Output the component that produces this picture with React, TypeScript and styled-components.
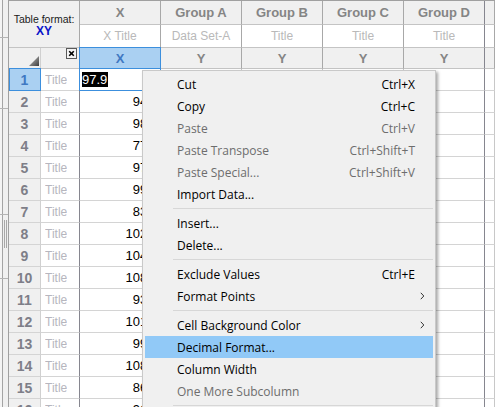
import React from 'react';
import styled, { createGlobalStyle, css } from 'styled-components';

const Global = createGlobalStyle`
  html, body { margin: 0; padding: 0; background: #ffffff; overflow: hidden; }
  body { width: 495px; height: 407px; }
`;

const Page = styled.div`
  position: relative;
  display: flex;
  width: 495px;
  height: 407px;
  overflow: hidden;
  font-family: "Liberation Sans", Arial, sans-serif;
`;

const Navigator = styled.div`
  flex: 0 0 9px;
  box-sizing: border-box;
  border-right: 1px solid #a0a0a0;
  background: linear-gradient(to right, #f4f4f4 2px, #a4a4a4 2px, #a4a4a4 3px, #f0f0f0 3px);
  display: flex;
  flex-direction: column;
`;

const NavSection = styled.div<{ $h: number }>`
  flex: 0 0 ${p => p.$h}px;
  box-sizing: border-box;
  border-bottom: 1px solid #b4b4b4;
`;

const Grip = styled.div`
  margin: 5px 0 0 4px;
  width: 1px;
  height: 28px;
  border-left: 1px solid #a8a8a8;
  border-right: 1px solid #a8a8a8;
`;

const Sheet = styled.div`
  flex: 1;
  box-sizing: border-box;
  border-top: 1px solid #a0a0a0;
  display: grid;
  grid-template-columns: 32px 39px 81px 81px 81px 81px 81px 1fr;
  grid-template-rows: 24px 23px 21px repeat(16, 22px);
  overflow: hidden;
`;

type Kind = 'format' | 'group' | 'subtitle' | 'corner' | 'colhead' | 'rowhead' | 'title' | 'value' | 'blank';

const kindStyles: Record<Kind, ReturnType<typeof css>> = {
  format: css`
    grid-column: 1 / span 2;
    grid-row: 1 / span 2;
    flex-direction: column;
    justify-content: center;
    background: #f0f0f0;
    border-right-color: #a8a8a8;
    border-bottom-color: #c4c4c4;
  `,
  group: css`
    justify-content: center;
    background: #f0f0f0;
    color: #858585;
    font-weight: bold;
    font-size: 13px;
    border-right-color: #a8a8a8;
    border-bottom-color: #c4c4c4;
  `,
  subtitle: css`
    justify-content: center;
    background: #ffffff;
    color: #b9b9b9;
    font-size: 12px;
    border-right-color: #a8a8a8;
    border-bottom-color: #c4c4c4;
  `,
  corner: css`
    background: #f0f0f0;
    justify-content: flex-end;
    border-right-color: #d0d0d0;
    border-bottom-color: #c4c4c4;
  `,
  colhead: css`
    justify-content: center;
    background: #f0f0f0;
    color: #858585;
    font-weight: bold;
    font-size: 13px;
    border-right-color: #a8a8a8;
    border-bottom-color: #c4c4c4;
  `,
  rowhead: css`
    justify-content: center;
    background: #f0f0f0;
    color: #7e7e88;
    font-weight: bold;
    font-size: 14px;
    border-right-color: #d0d0d0;
    border-bottom-color: #d4d4d4;
  `,
  title: css`
    justify-content: flex-start;
    padding-left: 4px;
    background: #ffffff;
    color: #b6b6be;
    font-size: 12px;
    border-right-color: #86868f;
    border-bottom-color: #d4d4d4;
  `,
  value: css`
    justify-content: flex-end;
    padding-right: 2px;
    background: #ffffff;
    color: #000000;
    font-size: 13px;
    border-right-color: #c8c8c8;
    border-bottom-color: #d4d4d4;
  `,
  blank: css`
    background: #ffffff;
    border-right-color: #c8c8c8;
    border-bottom-color: #d4d4d4;
  `,
};

const Cell = styled.div<{ $kind: Kind; $sel?: boolean; $dark?: boolean }>`
  box-sizing: border-box;
  position: relative;
  display: flex;
  align-items: center;
  min-width: 0;
  overflow: visible;
  white-space: nowrap;
  border-right: 1px solid transparent;
  border-bottom: 1px solid transparent;
  ${p => kindStyles[p.$kind]}
  ${p => p.$dark && css`border-right-color: #86868f;`}
  ${p => p.$sel && css`
    background: #aad0f2;
    color: #3f78c2;
  `}
`;

const SelectFrame = styled.span<{ $left: number }>`
  position: absolute;
  top: -1px;
  left: ${p => p.$left}px;
  right: -1px;
  bottom: -1px;
  border: 1px solid #3c8fdd;
  z-index: 1;
  pointer-events: none;
`;

const ClipText = styled.span`
  overflow: hidden;
`;

const FormatLabel = styled.div`
  font-size: 10.5px;
  color: #1a1a1a;
  line-height: 12px;
  margin-top: 3px;
`;

const FormatValue = styled.div`
  font-size: 12px;
  font-weight: bold;
  color: #0a14c8;
  line-height: 13px;
`;

const CornerIconWrap = styled.div<{ $top?: boolean }>`
  display: flex;
  align-self: ${p => (p.$top ? 'flex-start' : 'flex-end')};
  padding: ${p => (p.$top ? '0 2px 0 0' : '0 1px 2px 0')};
`;

const EditCell = styled(Cell)`
  justify-content: flex-start;
  padding-left: 2px;
`;

const EditSelection = styled.span`
  background: #000000;
  color: #ffffff;
  line-height: 15px;
  padding: 0 1px 0 0;
  font-size: 13px;
`;

const Menu = styled.div`
  position: absolute;
  left: 142px;
  top: 70px;
  width: 294px;
  box-sizing: border-box;
  background: #f0f0f0;
  border: 1px solid #c9c9c9;
  padding: 2px;
  box-shadow: 2px 2px 3px rgba(0, 0, 0, 0.35);
  font-family: "Open Sans", "Noto Sans", sans-serif;
  font-size: 12px;
  z-index: 10;
`;

const Item = styled.div<{ $disabled?: boolean; $active?: boolean }>`
  display: grid;
  grid-template-columns: 1fr auto 18px;
  align-items: center;
  height: 22px;
  padding-left: 32px;
  color: ${p => (p.$disabled ? '#6d6d6d' : '#000000')};
  background: ${p => (p.$active ? '#91c9f7' : 'transparent')};
`;

const Shortcut = styled.span`
  text-align: right;
`;

const Arrow = styled.span`
  display: flex;
  padding-left: 5px;
`;

const Separator = styled.div`
  height: 1px;
  margin: 3px 0 3px 28px;
  background: #d7d7d7;
`;

const Triangle = () => (
  <svg width="10" height="10" viewBox="0 0 10 10">
    <defs>
      <linearGradient id="tri" x1="0" y1="0" x2="1" y2="1">
        <stop offset="0" stopColor="#c8c8c8" />
        <stop offset="1" stopColor="#3c3c3c" />
      </linearGradient>
    </defs>
    <polygon points="10,0 10,10 0,10" fill="url(#tri)" />
  </svg>
);

const CloseBox = () => (
  <svg width="11" height="11" viewBox="0 0 11 11">
    <rect x="0.5" y="0.5" width="10" height="10" fill="#f4f4f4" stroke="#5a5a5a" />
    <path d="M3.2 3.2 L7.8 7.8 M7.8 3.2 L3.2 7.8" stroke="#000" strokeWidth="1.6" />
  </svg>
);

const Chevron = () => (
  <svg width="5" height="8" viewBox="0 0 5 8">
    <polyline points="0.8,0.8 3.8,4 0.8,7.2" fill="none" stroke="#333" strokeWidth="1" />
  </svg>
);

const groups = ['Group A', 'Group B', 'Group C', 'Group D'];
const values = ['97.9', '94.6', '98.2', '77.5', '97.3', '99.1', '83.4', '102.7', '104.2', '108.5', '93.8', '101.6', '99.7', '108.3', '86.9', '91.4'];

type MenuEntry =
  | { sep: true }
  | { label: string; shortcut?: string; disabled?: boolean; active?: boolean; sub?: boolean };

const menu: MenuEntry[] = [
  { label: 'Cut', shortcut: 'Ctrl+X' },
  { label: 'Copy', shortcut: 'Ctrl+C' },
  { label: 'Paste', shortcut: 'Ctrl+V', disabled: true },
  { label: 'Paste Transpose', shortcut: 'Ctrl+Shift+T', disabled: true },
  { label: 'Paste Special...', shortcut: 'Ctrl+Shift+V', disabled: true },
  { label: 'Import Data...' },
  { sep: true },
  { label: 'Insert...' },
  { label: 'Delete...' },
  { sep: true },
  { label: 'Exclude Values', shortcut: 'Ctrl+E' },
  { label: 'Format Points', sub: true },
  { sep: true },
  { label: 'Cell Background Color', sub: true },
  { label: 'Decimal Format...', active: true },
  { label: 'Column Width' },
  { label: 'One More Subcolumn', disabled: true },
  { sep: true },
];

export default function App() {
  return (
    <>
      <Global />
      <Page>
        <Navigator>
          <NavSection $h={38} />
          <NavSection $h={71} />
          <NavSection $h={106} />
          <NavSection $h={64}>
            <Grip />
          </NavSection>
        </Navigator>
        <Sheet>
          <Cell $kind="format">
            <FormatLabel>Table format:</FormatLabel>
            <FormatValue>XY</FormatValue>
          </Cell>
          <Cell $kind="group" style={{ gridColumn: 3, gridRow: 1 }}>X</Cell>
          {groups.map(g => (
            <Cell key={g} $kind="group" $dark={g === 'Group D'}>{g}</Cell>
          ))}
          <Cell $kind="group" />
          <Cell $kind="subtitle">X Title</Cell>
          <Cell $kind="subtitle">Data Set-A</Cell>
          <Cell $kind="subtitle">Title</Cell>
          <Cell $kind="subtitle">Title</Cell>
          <Cell $kind="subtitle" $dark>Title</Cell>
          <Cell $kind="subtitle" />

          <Cell $kind="corner">
            <CornerIconWrap>
              <Triangle />
            </CornerIconWrap>
          </Cell>
          <Cell $kind="corner" style={{ borderRightColor: '#86868f' }}>
            <CornerIconWrap $top>
              <CloseBox />
            </CornerIconWrap>
          </Cell>
          <Cell $kind="colhead" $sel>
            X
            <SelectFrame $left={-1} />
          </Cell>
          <Cell $kind="colhead">Y</Cell>
          <Cell $kind="colhead">Y</Cell>
          <Cell $kind="colhead">Y</Cell>
          <Cell $kind="colhead" $dark>Y</Cell>
          <Cell $kind="colhead" />

          {values.map((v, i) => (
            <React.Fragment key={i}>
              <Cell $kind="rowhead" $sel={i === 0}>
                {i + 1}
                {i === 0 && <SelectFrame $left={0} />}
              </Cell>
              <Cell $kind="title">
                <ClipText>Title</ClipText>
              </Cell>
              {i === 0 ? (
                <EditCell $kind="value">
                  <EditSelection>{v}</EditSelection>
                  <SelectFrame $left={-1} />
                </EditCell>
              ) : (
                <Cell $kind="value">{v}</Cell>
              )}
              <Cell $kind="blank" />
              <Cell $kind="blank" />
              <Cell $kind="blank" />
              <Cell $kind="blank" $dark />
              <Cell $kind="blank" />
            </React.Fragment>
          ))}
        </Sheet>

        <Menu>
          {menu.map((m, i) =>
            'sep' in m ? (
              <Separator key={i} />
            ) : (
              <Item key={i} $disabled={m.disabled} $active={m.active}>
                <span>{m.label}</span>
                <Shortcut>{m.shortcut ?? ''}</Shortcut>
                <Arrow>{m.sub ? <Chevron /> : null}</Arrow>
              </Item>
            )
          )}
        </Menu>
      </Page>
    </>
  );
}
